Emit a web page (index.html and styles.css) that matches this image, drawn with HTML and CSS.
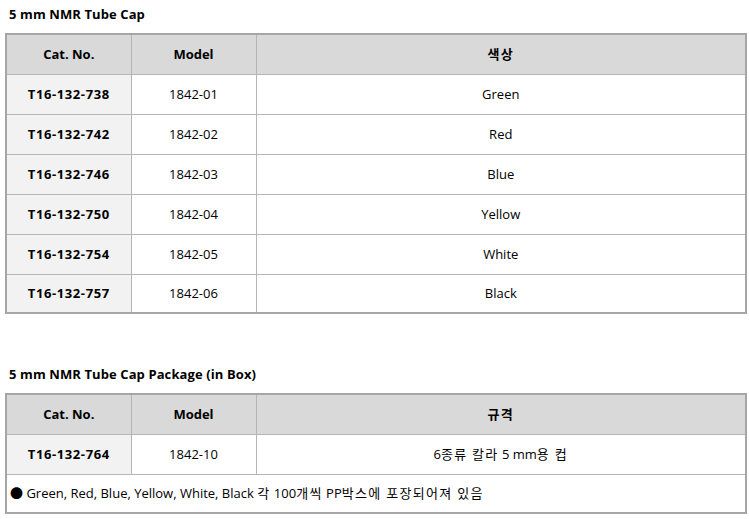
FILE: index.html
```html
<!DOCTYPE html>
<html lang="ko">
<head>
<meta charset="utf-8">
<link rel="stylesheet" href="styles.css">
</head>
<body>
<div class="page">
  <h2 class="title">5 mm NMR Tube Cap</h2>
  <table class="spec">
    <colgroup><col class="c1"><col class="c2"><col></colgroup>
    <thead>
      <tr><th>Cat. No.</th><th>Model</th><th><span class="ko">색상</span></th></tr>
    </thead>
    <tbody>
      <tr><td class="cat">T16-132-738</td><td>1842-01</td><td>Green</td></tr>
      <tr><td class="cat">T16-132-742</td><td>1842-02</td><td>Red</td></tr>
      <tr><td class="cat">T16-132-746</td><td>1842-03</td><td>Blue</td></tr>
      <tr><td class="cat">T16-132-750</td><td>1842-04</td><td>Yellow</td></tr>
      <tr><td class="cat">T16-132-754</td><td>1842-05</td><td>White</td></tr>
      <tr class="last"><td class="cat">T16-132-757</td><td>1842-06</td><td>Black</td></tr>
    </tbody>
  </table>

  <h2 class="title second">5 mm NMR Tube Cap Package (in Box)</h2>
  <table class="spec">
    <colgroup><col class="c1"><col class="c2"><col></colgroup>
    <thead>
      <tr><th>Cat. No.</th><th>Model</th><th><span class="ko">규격</span></th></tr>
    </thead>
    <tbody>
      <tr><td class="cat">T16-132-764</td><td>1842-10</td><td>6<span class="ko">종류 칼라</span> 5 mm<span class="ko">용 컵</span></td></tr>
      <tr class="note"><td colspan="3">● Green, Red, Blue, Yellow, White, Black <span class="ko">각</span> 100<span class="ko">개씩</span> PP<span class="ko">박스에 포장되어져 있음</span></td></tr>
    </tbody>
  </table>
</div>
</body>
</html>
```

FILE: styles.css
```css
* { box-sizing: border-box; }
html, body { margin: 0; padding: 0; background: #fff; }
body {
  font-family: "Open Sans", "Noto Sans CJK KR", sans-serif;
  font-size: 13px;
  color: #000;
}
.page { padding: 5px 2px 0 5px; }
.title {
  margin: 0 0 10px 0;
  padding-left: 4px;
  font-size: 13px;
  font-weight: 700;
  line-height: 18px;
  height: 18px;
  letter-spacing: 0.1px;
}
.title.second { margin-top: 51px; }
.ko { letter-spacing: 1.3px; }
.spec {
  width: 742px;
  border-collapse: collapse;
  border: 2px solid #a6a6a6;
  table-layout: fixed;
}
.spec col.c1 { width: 125px; }
.spec col.c2 { width: 125px; }
.spec th, .spec td {
  border: 1px solid #b5b5b5;
  height: 40px;
  padding: 0;
  text-align: center;
  vertical-align: middle;
  font-weight: 400;
  line-height: 18px;
}
.spec th {
  background: #d9d9d9;
  font-weight: 700;
}
.spec td.cat {
  background: #f2f2f2;
  font-weight: 700;
  letter-spacing: 0.6px;
}
.spec tr.last td { height: 39px; }
.spec tr.note td {
  text-align: left;
  padding-left: 3px;
  height: 39px;
}
.spec thead tr th { border-top: 2px solid #a6a6a6; }
```
